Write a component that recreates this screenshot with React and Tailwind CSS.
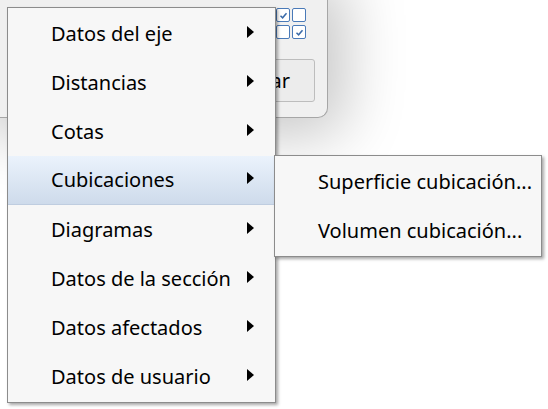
const mainItems = [
  'Datos del eje',
  'Distancias',
  'Cotas',
  'Cubicaciones',
  'Diagramas',
  'Datos de la sección',
  'Datos afectados',
  'Datos de usuario',
]

const subItems = ['Superficie cubicación...', 'Volumen cubicación...']

function Arrow() {
  return (
    <svg width="7" height="12" viewBox="0 0 7 12" className="shrink-0 -mt-[4px]">
      <path d="M0 0 L7 6 L0 12 Z" fill="#000" />
    </svg>
  )
}

function Check({ checked }) {
  return (
    <div className="w-[14px] h-[14px] rounded-[2px] border-[1.5px] border-[#4a7ab8] bg-white flex items-center justify-center">
      {checked && (
        <svg width="9" height="9" viewBox="0 0 9 9">
          <path d="M1.5 4.8 L3.6 6.8 L7.5 2.2" fill="none" stroke="#3a6aa8" strokeWidth="1.5" />
        </svg>
      )}
    </div>
  )
}

export default function App() {
  return (
    <div
      className="relative w-[548px] h-[409px] overflow-hidden bg-white text-black"
      style={{ fontFamily: '"Noto Sans", "Open Sans", sans-serif' }}
    >
      {/* dialog behind the menu */}
      <div className="absolute left-0 top-0 w-[328px] h-[118px] rounded-br-[10px] border-r border-b border-[#a6a6a6] bg-[#f0f0f0] shadow-[0_0_60px_18px_rgba(0,0,0,0.22)]">
        <div className="absolute left-[276px] top-[8px] grid grid-cols-2 gap-x-[2px] gap-y-[3px]">
          <Check checked />
          <Check />
          <Check />
          <Check checked />
        </div>
        <div className="absolute left-[200px] top-[59px] w-[115px] h-[43px] rounded-[3px] border border-[#bdbdbd] bg-[#ececec] flex items-center justify-end pr-[24px] text-[20px] leading-none">
          Cerrar
        </div>
      </div>

      {/* main context menu */}
      <div className="absolute left-[7px] top-[7px] w-[269px] border border-[#8c8c8c] bg-[#f7f7f7] py-px shadow-[2px_2px_3px_rgba(0,0,0,0.35)]">
        {mainItems.map((label) => (
          <div
            key={label}
            className={
              'h-[49px] flex items-center pl-[43px] pr-[21px] text-[20px] ' +
              (label === 'Cubicaciones'
                ? 'bg-gradient-to-b from-[#ebf3fc] to-[#cedbeb] border-b border-[#bfcde0]'
                : '')
            }
          >
            <span className="flex-1 whitespace-nowrap leading-none">{label}</span>
            <Arrow />
          </div>
        ))}
      </div>

      {/* submenu */}
      <div className="absolute left-[274px] top-[155px] w-[268px] border border-[#8c8c8c] bg-[#f7f7f7] py-px shadow-[2px_2px_3px_rgba(0,0,0,0.35)]">
        {subItems.map((label) => (
          <div key={label} className="h-[49px] flex items-center pl-[43px] text-[20px]">
            <span className="whitespace-nowrap leading-none">{label}</span>
          </div>
        ))}
      </div>
    </div>
  )
}
